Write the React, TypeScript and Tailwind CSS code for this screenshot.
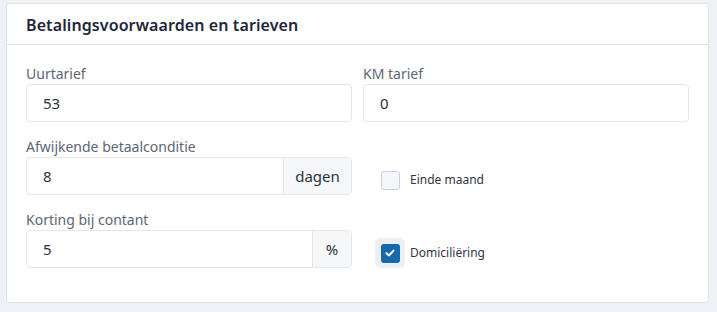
import React from "react";

function Field({ label, value, addon, addonW }: { label: string; value: string; addon?: string; addonW?: string }) {
  return (
    <div className="flex flex-col">
      <div className="text-[14px] leading-[18px] text-[#5e6675] h-[19px]">{label}</div>
      <div className="flex h-[38px] border border-[#e3e7ec] rounded-[4px] bg-white">
        <div className="flex-1 flex items-center pl-[16px] text-[15px] text-[#2b3340]">{value}</div>
        {addon && (
          <div className={`flex items-center justify-center border-l border-[#e3e7ec] bg-[#f6f7f9] rounded-r-[4px] text-[15px] text-[#2b3340] ${addonW}`}>{addon}</div>
        )}
      </div>
    </div>
  );
}

function Check({ label, checked }: { label: string; checked?: boolean }) {
  return (
    <div className="flex items-center h-[38px] pl-[12px] pt-[8px]">
      <div className={`w-[30px] h-[30px] flex items-center justify-center rounded-[5px] ${checked ? "bg-[#eceff3]" : ""}`}>
        {checked ? (
          <div className="w-[19px] h-[19px] rounded-[3px] bg-[#1769aa] flex items-center justify-center">
            <svg width="10" height="8" viewBox="0 0 10 8"><path d="M1.5 4.2 L4 6.4 L8.5 1.6" stroke="white" strokeWidth="2" fill="none" strokeLinecap="round" strokeLinejoin="round" /></svg>
          </div>
        ) : (
          <div className="w-[19px] h-[19px] rounded-[3px] border border-[#c9d0d9] bg-[#f4f6f9]" />
        )}
      </div>
      <span className="ml-[5px] text-[12px] text-[#2f3542]">{label}</span>
    </div>
  );
}

export default function App() {
  return (
    <div className="w-[717px] h-[312px] bg-[#eef1f5] pt-[3px] pl-[6px]" style={{ fontFamily: "'Noto Sans', sans-serif" }}>
      <div className="w-[703px] h-[300px] bg-white border border-[#dfe3e8] rounded-[3px]">
        <div className="h-[41px] border-b border-[#dfe3e8] flex items-center pl-[19px] pt-[1px]">
          <span className="text-[16px] font-semibold text-[#1f2738] tracking-[0.1px]">Betalingsvoorwaarden en tarieven</span>
        </div>
        <div className="px-[19px] pt-[20px] grid grid-cols-[326px_326px] gap-x-[11px] gap-y-[16px]">
          <Field label="Uurtarief" value="53" />
          <Field label="KM tarief" value="0" />
          <Field label="Afwijkende betaalconditie" value="8" addon="dagen" addonW="w-[68px]" />
          <div className="flex flex-col justify-end"><Check label="Einde maand" /></div>
          <Field label="Korting bij contant" value="5" addon="%" addonW="w-[39px]" />
          <div className="flex flex-col justify-end"><Check label="Domiciliëring" checked /></div>
        </div>
      </div>
    </div>
  );
}
